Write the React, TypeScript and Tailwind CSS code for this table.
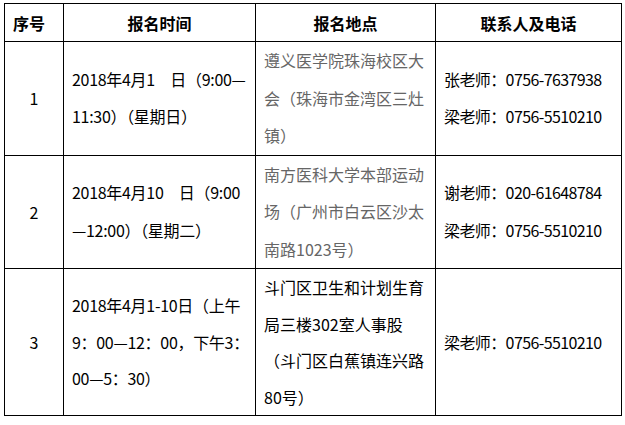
import React from "react";

const FONT = { fontFamily: '"Noto Sans CJK SC", "Noto Sans", sans-serif' };

type Row = {
  no: string;
  time: string[];
  place: string[];
  placeGray: boolean;
  contacts: string[];
  h: string;
  lead: string;
};

const ROWS: Row[] = [
  {
    no: "1",
    time: ["2018年4月1\u2002\u2002日（9:00—", "11:30）（星期日）"],
    place: ["遵义医学院珠海校区大", "会（珠海市金湾区三灶", "镇）"],
    placeGray: true,
    contacts: ["张老师：0756-7637938", "梁老师：0756-5510210"],
    h: "h-[112px]",
    lead: "leading-[37.5px]",
  },
  {
    no: "2",
    time: ["2018年4月10\u2002\u2002日（9:00", "—12:00）（星期二）"],
    place: ["南方医科大学本部运动", "场（广州市白云区沙太", "南路1023号）"],
    placeGray: true,
    contacts: ["谢老师：020-61648784", "梁老师：0756-5510210"],
    h: "h-[112px]",
    lead: "leading-[37.5px]",
  },
  {
    no: "3",
    time: ["2018年4月1-10日（上午", "9：00—12：00，下午3：", "00—5：30）"],
    place: ["斗门区卫生和计划生育", "局三楼302室人事股", "（斗门区白蕉镇连兴路", "80号）"],
    placeGray: false,
    contacts: ["梁老师：0756-5510210"],
    h: "h-[147px]",
    lead: "leading-[36.5px]",
  },
];

function Lines({ lines }: { lines: string[] }) {
  return (
    <>
      {lines.map((l, i) => (
        <div key={i} className="whitespace-nowrap">
          {l}
        </div>
      ))}
    </>
  );
}

export default function App() {
  return (
    <div className="w-[625px] h-[425px] bg-white overflow-hidden pt-[3px] pl-[4px]" style={FONT}>
      <table className="table-fixed border-collapse w-[618px] text-[16px] text-black">
        <colgroup>
          <col className="w-[59px]" />
          <col className="w-[192px]" />
          <col className="w-[180px]" />
          <col className="w-[186px]" />
        </colgroup>
        <thead>
          <tr className="h-[38px]">
            <th className="border border-black px-2 text-left font-bold leading-none">序号</th>
            <th className="border border-black px-2 text-center font-bold leading-none">报名时间</th>
            <th className="border border-black px-2 text-center font-bold leading-none">报名地点</th>
            <th className="border border-black px-2 text-center font-bold leading-none">联系人及电话</th>
          </tr>
        </thead>
        <tbody>
          {ROWS.map((r) => (
            <tr key={r.no} className={r.h}>
              <td className="border border-black text-center align-middle leading-none">{r.no}</td>
              <td className={`border border-black px-2 align-middle tracking-[-0.3px] ${r.lead}`}>
                <Lines lines={r.time} />
              </td>
              <td
                className={`border border-black px-2 align-middle ${r.lead} ${
                  r.placeGray ? "text-[#666666]" : "text-black"
                }`}
              >
                <Lines lines={r.place} />
              </td>
              <td className={`border border-black px-2 align-middle tracking-[-0.6px] ${r.lead}`}>
                <Lines lines={r.contacts} />
              </td>
            </tr>
          ))}
        </tbody>
      </table>
    </div>
  );
}
